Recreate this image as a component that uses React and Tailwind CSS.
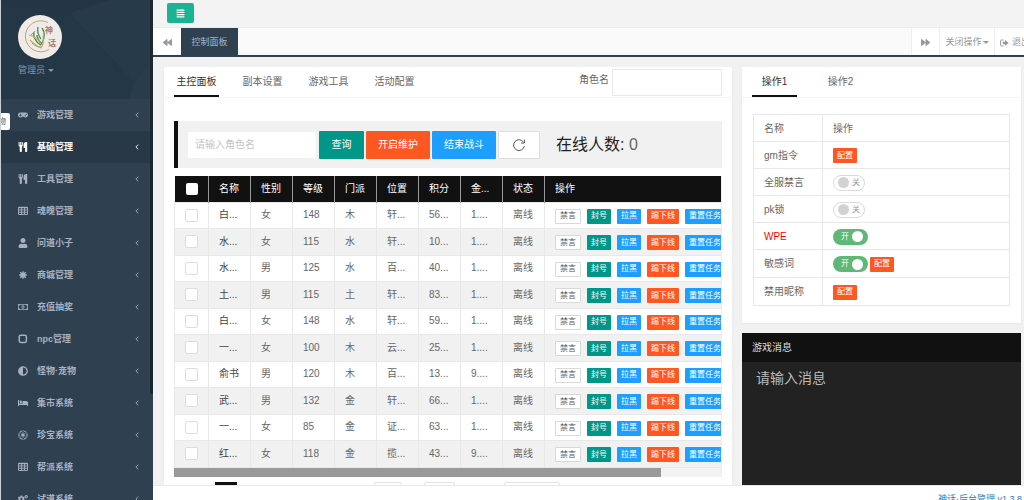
import {
  FaAdjust,
  FaAlignJustify,
  FaBackward,
  FaBed,
  FaCogs,
  FaEmpire,
  FaForward,
  FaGamepad,
  FaRegMoneyBillAlt,
  FaUser,
} from "react-icons/fa";

function Cutlery({ className }) {
  return (
    <svg viewBox="0 0 10 10" className={className} fill="currentColor">
      <path d="M.6 0h1v3h.6V0h1v3h.6V0h1v3.400c0 .6-.4 1-.9 1.200V9.200c0 .5-.4.8-1.100.8s-1.100-.3-1.100-.8V4.600C1 4.400.6 4 .6 3.400zM9.200 0v9.200c0 .5-.4.8-1.100.8S7 9.700 7 9.200V6H5.600V2.500C5.600 1 6.800 0 8.200 0z" />
    </svg>
  );
}

function Grid({ className }) {
  return (
    <svg viewBox="0 0 10 10" className={className} fill="none" stroke="currentColor">
      <path d="M.5 1.500h9v7h-9zM3.500 1.500v7M6.500 1.500v7M.5 4h9M.5 6.300h9" strokeWidth=".9" />
      <path d="M.5 1.500h9" strokeWidth="1.400" />
    </svg>
  );
}

function Burst({ className }) {
  return (
    <svg viewBox="0 0 10 10" className={className} fill="currentColor" stroke="currentColor">
      <circle cx="5" cy="5" r="2.600" stroke="none" />
      <path d="M5 1.200v7.600M1.200 5h7.600M2.300 2.300l5.400 5.400M7.700 2.300L2.300 7.700" strokeWidth="1.300" />
    </svg>
  );
}

function RoundSquare({ className }) {
  return (
    <svg viewBox="0 0 10 10" className={className} fill="none" stroke="currentColor">
      <rect x="1.200" y="1.200" width="7.200" height="7.200" rx="1.600" strokeWidth="1.500" />
    </svg>
  );
}

function Caret() {
  return (
    <svg viewBox="0 0 6 3" className="ml-px h-[3px] w-[6px]" fill="currentColor">
      <path d="M0 0h6L3 3z" />
    </svg>
  );
}

function SignOut() {
  return (
    <svg viewBox="0 0 9 8" className="h-2 w-[9px] shrink-0">
      <path d="M3.500 1H1.500Q.6 1 .6 2v4q0 1 .9 1h2" fill="none" stroke="currentColor" strokeWidth="1" />
      <path d="M2.800 2.800H5V.9L8.600 4 5 7.100V5.200H2.800z" fill="currentColor" />
    </svg>
  );
}

const menus = [
  { name: "游戏管理", icon: FaGamepad },
  { name: "基础管理", icon: Cutlery, active: true },
  { name: "工具管理", icon: Cutlery },
  { name: "魂魄管理", icon: Grid },
  { name: "问道小子", icon: FaUser },
  { name: "商城管理", icon: Burst },
  { name: "充值抽奖", icon: FaRegMoneyBillAlt },
  { name: "npc管理", icon: RoundSquare },
  { name: "怪物·宠物", icon: FaAdjust },
  { name: "集市系统", icon: FaBed },
  { name: "珍宝系统", icon: FaEmpire },
  { name: "帮派系统", icon: Grid },
  { name: "试道系统", icon: FaCogs },
];

const columns = ["名称", "性别", "等级", "门派", "位置", "积分", "金...", "状态"];

const players = [
  ["白...", "女", "148", "木", "轩...", "56...", "1....", "离线"],
  ["水...", "女", "115", "水", "轩...", "10...", "1....", "离线"],
  ["水...", "男", "125", "水", "百...", "40...", "1....", "离线"],
  ["土...", "男", "115", "土", "轩...", "83...", "1....", "离线"],
  ["白...", "女", "148", "水", "轩...", "59...", "1....", "离线"],
  ["一...", "女", "100", "木", "云...", "25...", "1....", "离线"],
  ["俞书", "男", "120", "木", "百...", "13...", "9....", "离线"],
  ["武...", "男", "132", "金", "轩...", "66...", "1....", "离线"],
  ["一...", "女", "85", "金", "证...", "63...", "1....", "离线"],
  ["红...", "女", "118", "金", "揽...", "43...", "9....", "离线"],
];

const actions = [
  { name: "禁言", style: "border border-[#d8d8d8] bg-white text-[#555]" },
  { name: "封号", style: "bg-[#009688] text-white" },
  { name: "拉黑", style: "bg-[#1e9fff] text-white" },
  { name: "踢下线", style: "bg-[#ff5722] text-white" },
  { name: "重置任务", style: "bg-[#1e9fff] text-white" },
];

const settings = [
  { name: "gm指令", config: true },
  { name: "全服禁言", toggle: "off" },
  { name: "pk锁", toggle: "off" },
  { name: "WPE", toggle: "on", danger: true },
  { name: "敏感词", toggle: "on", config: true },
  { name: "禁用昵称", config: true },
];

function Logo() {
  return (
    <svg viewBox="0 0 44 44" className="size-11 rounded-full bg-[#f0ebe8]" role="img" aria-label="logo">
      <path d="M30 7.500A15.500 15.500 0 1 0 31 34.500" fill="none" stroke="#b3aa72" strokeWidth="1" />
      <path d="M16 17c-1 3 0 6 3 10 1 1 2 2 4 3M20 12c-1 4 0 8 3 12M24 13c3 4 3 9 0 16-3-3-5-6-5-9" fill="none" stroke="#4f9158" strokeWidth="1.400" />
      <path d="M11 20c4 1 9 4 12 9M12 25c3 3 6 6 11 8 2-3 3-7 2-12" fill="none" stroke="#cda95c" strokeWidth="1.100" />
      <path d="M13 20l4-4M14 28c3 3 6 4 9 4" fill="none" stroke="#8fae6c" strokeWidth="1" />
      <text x="27" y="18" fontSize="8" fontWeight="700" fill="#a9796b">神</text>
      <text x="30" y="31" fontSize="8" fontWeight="700" fill="#a9796b">话</text>
    </svg>
  );
}

function Sidebar() {
  return (
    <aside className="relative flex w-[153px] shrink-0 overflow-hidden border-l border-[#c9ced3] bg-[#2f4050]">
      <div className="min-w-0 flex-1">
        <div className="relative h-[99px] bg-[#243646] pt-[15px] pl-[17px]">
          <svg viewBox="0 0 152 99" preserveAspectRatio="none" className="absolute inset-0 size-full" aria-hidden="true">
            <path d="M0 5L70 13L136 83L130 99H0z" fill="#243747" />
            <path d="M70 13L110 0H152V60L136 83z" fill="#273a4a" />
            <path d="M136 83L152 60V99H130z" fill="#283c4b" />
          </svg>
          <div className="relative">
            <Logo />
            <button className="mt-1 flex items-center gap-[2px] text-[9px] leading-[14px] text-[#8095a8]">
              管理员
              <Caret />
            </button>
          </div>
        </div>
        <nav>
          {menus.map(({ name, icon: Icon, active }) => (
            <a
              key={name}
              href="#"
              className={`flex h-8 items-center pr-[11px] pl-[17px] text-[9px] font-semibold ${
                active ? "bg-[#293846] text-white" : "text-[#a7b1c2]"
              }`}
            >
              <Icon className="size-[10px]" />
              <span className="ml-[9px] flex-1 pt-px">{name}</span>
              <svg viewBox="0 0 4 6" className="h-[6px] w-1" fill="none" stroke="currentColor">
                <path d="M3.300.6L.9 3l2.400 2.400" strokeWidth=".9" />
              </svg>
            </a>
          ))}
        </nav>
      </div>
      {/* 滚动条 */}
      <div className="h-[394px] w-[3px] shrink-0 rounded-b bg-[#1b2832]" />
      <div className="absolute top-[113px] left-0 flex h-[17px] w-[9px] items-center justify-end overflow-hidden rounded-r-[2px] bg-white pr-1 text-[8px] whitespace-nowrap text-[#555]">
        宠物
      </div>
    </aside>
  );
}

function TopBar() {
  return (
    <header className="shrink-0">
      <div className="h-7 border-b border-[#eaeaea] bg-[#f3f3f4] pt-[3px] pl-[14px]">
        <button aria-label="菜单" className="flex h-5 w-[27px] items-center justify-center rounded-[2px] bg-[#1ab394] text-white">
          <FaAlignJustify className="size-[9px]" />
        </button>
      </div>
      <div className="flex h-[29px] overflow-hidden border-b-2 border-[#2f4050] bg-[#fafafa] text-[9px] whitespace-nowrap text-[#999]">
        <button aria-label="向左" className="flex w-7 shrink-0 items-center justify-center bg-white pt-px">
          <FaBackward className="size-[9px]" />
        </button>
        <a href="#" className="flex w-[57px] shrink-0 items-center justify-center bg-[#2f4050] pt-[2px] text-[#a7b1c2]">
          控制面板
        </a>
        <div className="flex-1" />
        <button aria-label="向右" className="flex w-7 shrink-0 items-center justify-center border-l border-[#eee] bg-white pt-px">
          <FaForward className="size-[9px]" />
        </button>
        <button className="flex w-[55px] shrink-0 items-center justify-center border-l border-[#eee] bg-white pt-[2px]">
          关闭操作
          <Caret />
        </button>
        <a href="#" className="flex w-[30px] shrink-0 items-center gap-[3px] border-l border-[#eee] bg-white pt-[2px] pl-[5px]">
          <SignOut />
          退出
        </a>
      </div>
    </header>
  );
}

function Tabs({ items, children }) {
  return (
    <div className="flex h-[31px] border-b border-[#f4f4f4] px-[10px]">
      <div className="flex gap-[21px]">
        {items.map((item, i) => (
          <button
            key={item}
            className={`h-[30px] w-[45px] border-b-2 text-[10px] whitespace-nowrap ${
              i === 0 ? "border-[#111] text-[#333]" : "border-transparent text-[#666]"
            }`}
          >
            {item}
          </button>
        ))}
      </div>
      {children}
    </div>
  );
}

function SearchBar() {
  return (
    <div className="flex h-[47px] items-center border-l-4 border-[#111] bg-[#f1f1f1] pl-[10px] whitespace-nowrap">
      <input
        aria-label="查询角色名"
        placeholder="请输入角色名"
        className="mr-[3px] h-[26px] w-[128px] bg-white px-[7px] text-[10px] placeholder:text-[#c4c4c4]"
      />
      <div className="flex gap-[2px] text-[10px] text-white">
        <button className="h-7 w-[45px] rounded-[1px] bg-[#009688]">查询</button>
        <button className="h-7 w-16 rounded-[1px] bg-[#ff5722]">开启维护</button>
        <button className="h-7 w-16 rounded-[1px] bg-[#1e9fff]">结束战斗</button>
        <button aria-label="刷新" className="flex h-7 w-[42px] items-center justify-center rounded-[1px] border border-[#ddd] bg-white text-[#555]">
          <svg viewBox="0 0 14 14" className="size-[14px]" fill="none" stroke="currentColor" strokeWidth="1">
            <path d="M12.3 8.2A5.4 5.4 0 1 1 11.5 4.1M12.4 1.6V5H9" />
          </svg>
        </button>
      </div>
      <p className="ml-4 text-[16px] text-[#222]">
        在线人数: <span className="text-[#666]">0</span>
      </p>
    </div>
  );
}

function PlayerTable() {
  return (
    <div className="overflow-hidden border-r border-[#eee]">
      <table className="w-full min-w-[612px] table-fixed border-collapse text-left text-[10px] whitespace-nowrap text-[#666]">
        <colgroup>
          <col className="w-[34px]" />
          {columns.map((c) => (
            <col key={c} className="w-[42px]" />
          ))}
          <col />
        </colgroup>
        <thead>
          <tr className="h-[26px] bg-[#111] text-white">
            <th className="border-r border-[#999] p-0 pl-[11px]">
              <input type="checkbox" aria-label="全选" className="block size-[12px] appearance-none rounded-[2px] bg-white" />
            </th>
            {columns.map((c) => (
              <th key={c} className="border-r border-[#999] p-0 pl-[10px] font-normal">
                {c}
              </th>
            ))}
            <th className="p-0 pl-[10px] font-normal">操作</th>
          </tr>
        </thead>
        <tbody>
          {players.map((row, i) => (
            <tr key={i} className="odd:h-[26px] even:h-[27px] even:bg-[#f1f1f1]">
              <td className="border border-[#e8e8e8] p-0 pl-[10px]">
                <input
                  type="checkbox"
                  aria-label={`选择 ${row[0]}`}
                  className="block size-[13px] appearance-none rounded-[2px] border border-[#ddd] bg-white"
                />
              </td>
              {row.map((cell, j) => (
                <td key={j} className={`border border-[#e8e8e8] p-0 pl-[10px] leading-none ${j === 0 ? "text-[#444]" : ""}`}>
                  {cell}
                </td>
              ))}
              <td className="border border-[#e8e8e8] p-0 pl-[10px]">
                <div className="flex gap-[6px] pt-[2px]">
                  {actions.map((a) => (
                    <button key={a.name} className={`h-[15px] shrink-0 rounded-[1px] px-1 text-[8px] leading-none ${a.style}`}>
                      {a.name}
                    </button>
                  ))}
                </div>
              </td>
            </tr>
          ))}
        </tbody>
      </table>
      {/* 横向滚动条 */}
      <div className="h-[9px] bg-[#f3f3f3]">
        <div className="h-full w-[89%] bg-[#999]" />
      </div>
    </div>
  );
}

function Pagination() {
  return (
    <div className="flex pt-[5px] pl-[41px] text-[9px] text-[#666]">
      <button className="h-5 w-[22px] bg-[#111] text-white">1</button>
      <input aria-label="页码" defaultValue="1" className="ml-[137px] h-5 w-7 rounded-[2px] border border-[#e2e2e2] text-center" />
      <button className="ml-[22px] h-5 w-[31px] rounded-[2px] border border-[#e2e2e2]">确定</button>
      <select aria-label="每页条数" className="ml-[49px] h-5 w-14 rounded-[2px] border border-[#e2e2e2]">
        <option>10 条/页</option>
      </select>
    </div>
  );
}

function Toggle({ label, on }) {
  return (
    <label
      className={`flex h-4 items-center rounded-full text-[8px] leading-none ${
        on ? "w-[35px] bg-[#5fb878] pr-1 pl-2 text-white" : "w-8 border border-[#d9d9d9] bg-white px-1 text-[#999]"
      }`}
    >
      <input
        type="checkbox"
        aria-label={label}
        defaultChecked={on}
        className={`size-[11px] shrink-0 appearance-none rounded-full ${on ? "order-2 ml-[3px] bg-white" : "mr-[3px] bg-[#d2d2d2]"}`}
      />
      {on ? "开" : "关"}
    </label>
  );
}

function SettingTable() {
  return (
    <table className="w-full table-fixed border-collapse text-left text-[10px] text-[#666]">
      <thead>
        <tr className="h-[27px]">
          <th className="w-[69px] border border-[#e8e8e8] p-0 pl-[10px] font-normal">名称</th>
          <th className="border border-[#e8e8e8] p-0 pl-[10px] font-normal">操作</th>
        </tr>
      </thead>
      <tbody>
        {settings.map((s) => (
          <tr key={s.name} className="h-[27px] nth-last-[-n+2]:h-7">
            <td className={`border border-[#e8e8e8] p-0 pl-[10px] ${s.danger ? "text-[#f00]" : ""}`}>{s.name}</td>
            <td className="border border-[#e8e8e8] p-0 pl-[10px]">
              <div className="flex items-center gap-[2px] pt-px">
                {s.toggle && <Toggle label={s.name} on={s.toggle === "on"} />}
                {s.config && (
                  <button className="h-[15px] rounded-[1px] bg-[#ff5722] px-1 text-[8px] leading-none text-white">配置</button>
                )}
              </div>
            </td>
          </tr>
        ))}
      </tbody>
    </table>
  );
}

export default function App() {
  return (
    <div className="flex h-screen overflow-hidden bg-[#f1f1f1] font-['Liberation_Sans','Noto_Sans_CJK_SC',sans-serif]">
      <Sidebar />
      <div className="flex min-w-0 flex-1 flex-col">
        <TopBar />
        <main className="flex min-h-0 flex-1 gap-[10px] overflow-hidden pt-[10px] pr-[3px] pl-[11px]">
          <section className="min-w-0 flex-1 bg-white shadow-xs">
            <Tabs items={["主控面板", "副本设置", "游戏工具", "活动配置"]}>
              <label className="ml-auto flex gap-[3px] pt-[2px] text-[10px] leading-[22px] whitespace-nowrap text-[#666]">
                角色名
                <input className="h-[27px] w-[110px] rounded-[1px] border border-[#e8e8e8] px-2" />
              </label>
            </Tabs>
            <div className="px-[10px] pt-[23px]">
              <SearchBar />
              <div className="mt-2">
                <PlayerTable />
              </div>
              <Pagination />
            </div>
          </section>
          <div className="flex w-[279px] shrink-0 flex-col gap-[10px]">
            <section className="bg-white pb-[17px] shadow-xs">
              <Tabs items={["操作1", "操作2"]} />
              <div className="px-[11px] pt-4">
                <SettingTable />
              </div>
            </section>
            <section className="flex min-h-0 flex-1 flex-col bg-[#222]">
              <h2 className="flex h-[29px] shrink-0 items-center bg-[#111] px-[10px] text-[10px] text-[#ddd]">游戏消息</h2>
              <textarea
                aria-label="游戏消息"
                placeholder="请输入消息"
                className="min-h-0 flex-1 resize-none px-[14px] pt-[6px] text-[14px] leading-5 text-white placeholder:text-[#bbb]"
              />
            </section>
          </div>
        </main>
        <footer className="flex h-[15px] shrink-0 justify-end overflow-hidden border-t border-[#e7eaec] bg-white pt-[6px] pr-[2px] text-[9px] leading-[14px]">
          <a href="#" className="text-[#337ab7]">神话·后台管理 v1.3.8</a>
        </footer>
      </div>
    </div>
  );
}
